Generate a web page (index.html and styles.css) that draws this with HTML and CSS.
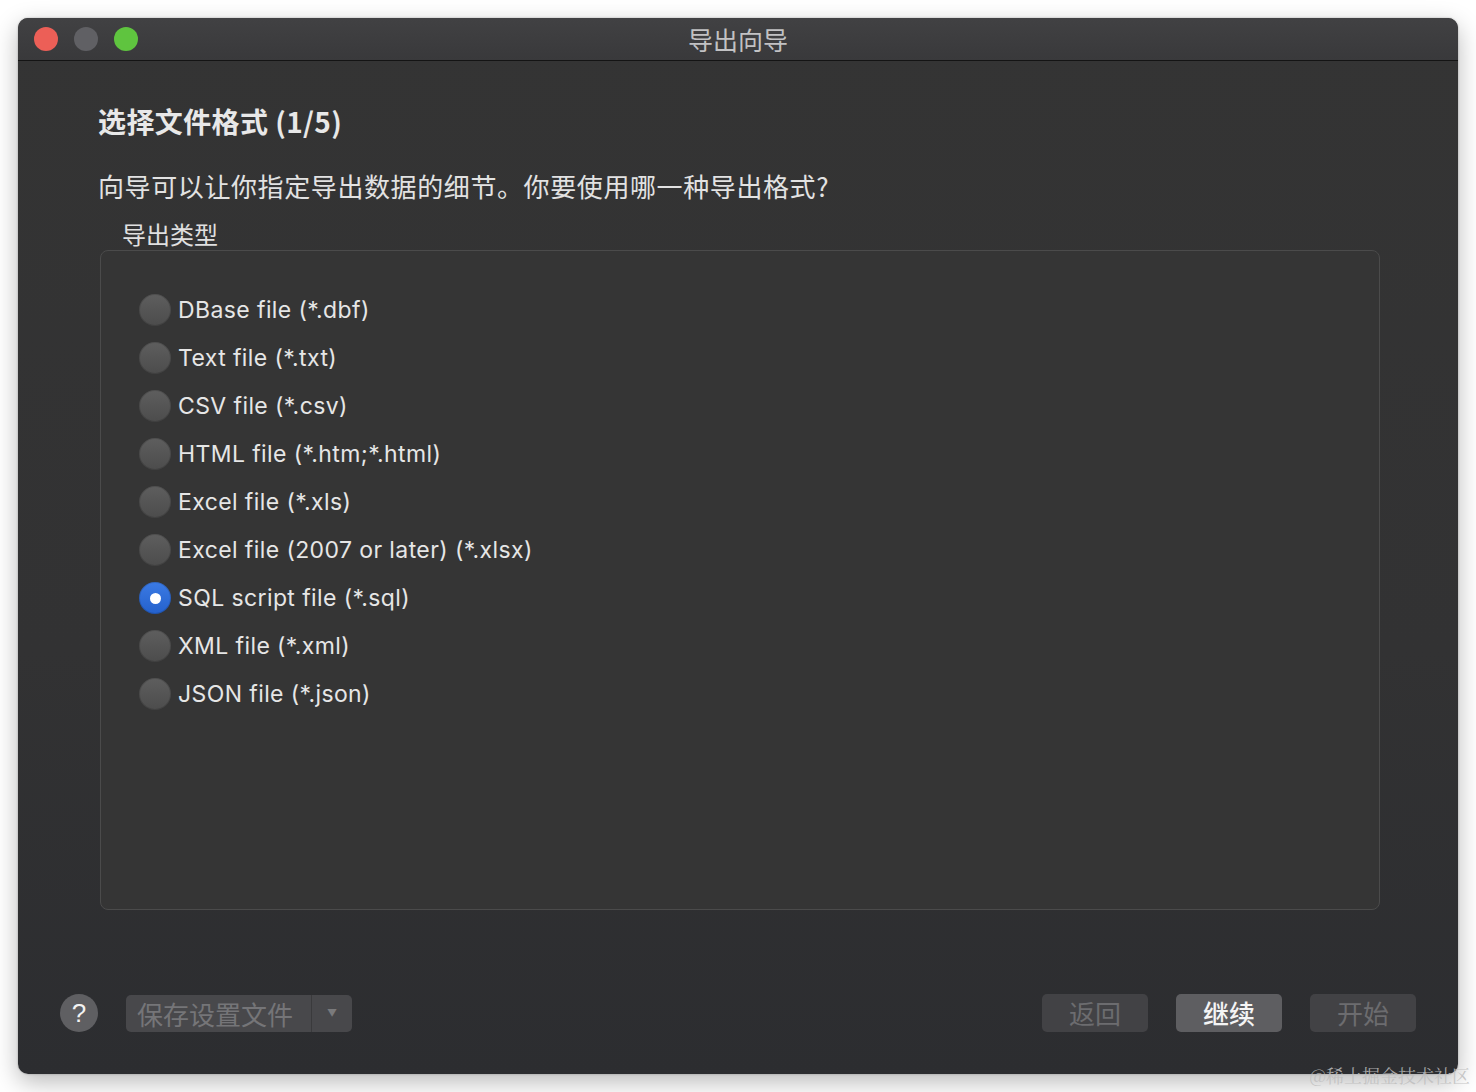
FILE: index.html
```html
<!DOCTYPE html>
<html lang="zh-CN">
<head>
<meta charset="utf-8">
<title>导出向导</title>
<link rel="stylesheet" href="styles.css">
</head>
<body>
<div class="window">
  <div class="titlebar">
    <div class="lights">
      <span class="light red"></span>
      <span class="light gray"></span>
      <span class="light green"></span>
    </div>
    <div class="title">导出向导</div>
  </div>
  <div class="content">
    <h1 class="heading">选择文件格式 (1/5)</h1>
    <p class="desc">向导可以让你指定导出数据的细节。你要使用哪一种导出格式?</p>
    <div class="group-label">导出类型</div>
    <div class="group">
      <ul class="radios">
        <li class="radio"><span class="dot"></span><span class="label">DBase file (*.dbf)</span></li>
        <li class="radio"><span class="dot"></span><span class="label">Text file (*.txt)</span></li>
        <li class="radio"><span class="dot"></span><span class="label">CSV file (*.csv)</span></li>
        <li class="radio"><span class="dot"></span><span class="label">HTML file (*.htm;*.html)</span></li>
        <li class="radio"><span class="dot"></span><span class="label">Excel file (*.xls)</span></li>
        <li class="radio"><span class="dot"></span><span class="label">Excel file (2007 or later) (*.xlsx)</span></li>
        <li class="radio checked"><span class="dot"></span><span class="label">SQL script file (*.sql)</span></li>
        <li class="radio"><span class="dot"></span><span class="label">XML file (*.xml)</span></li>
        <li class="radio"><span class="dot"></span><span class="label">JSON file (*.json)</span></li>
      </ul>
    </div>
  </div>
  <div class="footer">
    <div class="footer-left">
      <span class="help">?</span>
      <div class="split-btn">
        <span class="split-main">保存设置文件</span>
        <span class="split-arrow">▼</span>
      </div>
    </div>
    <div class="footer-right">
      <span class="btn disabled">返回</span>
      <span class="btn primary">继续</span>
      <span class="btn disabled">开始</span>
    </div>
  </div>
</div>
<div class="watermark">@稀土掘金技术社区</div>
</body>
</html>
```

FILE: styles.css
```css
html, body {
  margin: 0;
  padding: 0;
  background: #ffffff;
}
body {
  width: 1476px;
  height: 1092px;
  position: relative;
  overflow: hidden;
  font-family: "Inter", "Noto Sans CJK SC", sans-serif;
}
.window {
  margin: 18px 0 0 18px;
  width: 1440px;
  height: 1056px;
  border-radius: 10px;
  overflow: hidden;
  display: flex;
  flex-direction: column;
  background: linear-gradient(#343434 0%, #323233 60%, #2c2d30 100%);
  box-shadow: 0 8px 24px rgba(0, 0, 0, 0.28), 0 0 2px rgba(0, 0, 0, 0.3);
}
.titlebar {
  height: 42px;
  border-bottom: 1px solid #141414;
  background: linear-gradient(#414143, #39393b);
  display: flex;
  align-items: center;
  position: relative;
}
.lights {
  display: flex;
  gap: 16px;
  padding-left: 16px;
}
.light {
  width: 24px;
  height: 24px;
  border-radius: 50%;
}
.light.red { background: #ec5f57; }
.light.gray { background: #606064; }
.light.green { background: #5fc43f; }
.title {
  position: absolute;
  left: 0;
  right: 0;
  top: 0;
  line-height: 42px;
  text-align: center;
  font-family: "Noto Sans CJK SC", sans-serif;
  font-size: 25px;
  color: #c2c2c4;
}
.content {
  flex: 1;
  padding: 0 78px 0 80px;
  display: flex;
  flex-direction: column;
}
.heading {
  margin: 42px 0 0 0;
  font-size: 28px;
  line-height: 36px;
  font-weight: 700;
  color: #e8e8e8;
  letter-spacing: 0.4px;
  font-family: "Noto Sans CJK SC", sans-serif;
}
.desc {
  margin: 29px 0 0 0;
  font-size: 26px;
  line-height: 36px;
  color: #e2e2e2;
  letter-spacing: 0.6px;
  font-family: "Noto Sans CJK SC", sans-serif;
}
.group-label {
  margin: 15px 0 0 24px;
  font-size: 24px;
  line-height: 30px;
  color: #e0e0e0;
  font-family: "Noto Sans CJK SC", sans-serif;
}
.group {
  margin: 1px 0 0 2px;
  width: 1278px;
  height: 658px;
  border: 1px solid #4b4b4b;
  border-radius: 8px;
  background: #353535;
}
.radios {
  list-style: none;
  margin: 0;
  padding: 35px 0 0 38px;
}
.radio {
  height: 48px;
  display: flex;
  align-items: center;
}
.dot {
  width: 32px;
  height: 32px;
  border-radius: 50%;
  background: linear-gradient(#5e5e5e, #4c4c4c);
  box-shadow: inset 0 0 0 1px rgba(0, 0, 0, 0.15);
  flex: none;
  display: flex;
  align-items: center;
  justify-content: center;
}
.radio.checked .dot {
  background: linear-gradient(#3b7ae4, #2461cc);
}
.radio.checked .dot::after {
  content: "";
  width: 11px;
  height: 11px;
  border-radius: 50%;
  background: #ffffff;
}
.label {
  margin-left: 7px;
  font-size: 23px;
  color: #e6e6e6;
  letter-spacing: 0.4px;
}
.footer {
  height: 38px;
  padding: 0 42px 42px 42px;
  display: flex;
  justify-content: space-between;
  align-items: center;
}
.footer-left, .footer-right {
  display: flex;
  align-items: center;
  gap: 28px;
}
.help {
  width: 38px;
  height: 38px;
  border-radius: 50%;
  background: #5f5f62;
  color: #f2f2f2;
  font-size: 26px;
  line-height: 38px;
  text-align: center;
  font-family: "Liberation Sans", sans-serif;
}
.split-btn {
  display: flex;
  height: 37px;
  border-radius: 5px;
  background: #48484b;
  overflow: hidden;
}
.split-main {
  width: 174px;
  padding-left: 11px;
  line-height: 37px;
  font-size: 26px;
  color: #757578;
  font-family: "Noto Sans CJK SC", sans-serif;
  border-right: 1px solid #3a3a3c;
}
.split-arrow {
  width: 40px;
  line-height: 37px;
  text-align: center;
  font-size: 10px;
  color: #7a7a7c;
}
.btn {
  width: 106px;
  height: 38px;
  border-radius: 5px;
  line-height: 38px;
  text-align: center;
  font-size: 26px;
  font-family: "Noto Sans CJK SC", sans-serif;
}
.btn.disabled {
  background: #424245;
  color: #6c6c6f;
}
.btn.primary {
  background: #5e5e61;
  color: #f4f4f4;
  font-weight: 500;
}
.watermark {
  position: absolute;
  right: 6px;
  top: 1062px;
  font-family: "Noto Serif CJK SC", "Liberation Serif", serif;
  font-size: 18px;
  color: rgba(190, 190, 190, 0.85);
}
```
